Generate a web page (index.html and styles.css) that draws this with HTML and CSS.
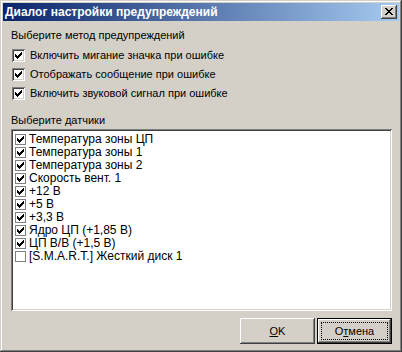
FILE: index.html
```html
<!DOCTYPE html>
<html>
<head>
    <title>Диалог настройки предупреждений</title>
    <link rel="stylesheet" href="styles.css">
</head>
<body>
    <div class="window">
        <div class="titlebar">
            <span class="title">Диалог настройки предупреждений</span>
            <button class="close-btn">
                <svg width="8" height="7" viewBox="0 0 8 7" shape-rendering="crispEdges"><path d="M0 0h2v1h-2zM6 0h2v1h-2zM1 1h2v1h-2zM5 1h2v1h-2zM2 2h4v1h-4zM3 3h2v1h-2zM2 4h4v1h-4zM1 5h2v1h-2zM5 5h2v1h-2zM0 6h2v1h-2zM6 6h2v1h-2z" fill="#000"/></svg>
            </button>
        </div>

        <div class="content">
            <div class="group-label">Выберите метод предупреждений</div>
            <div class="options">
                <label class="option"><span class="check3d"><svg class="tick" width="7" height="7" viewBox="0 0 7 7" shape-rendering="crispEdges"><path d="M0 2h1v3h-1zM1 3h1v3h-1zM2 4h1v3h-1zM3 3h1v3h-1zM4 2h1v3h-1zM5 1h1v3h-1zM6 0h1v3h-1z"/></svg></span>Включить мигание значка при ошибке</label>
                <label class="option"><span class="check3d"><svg class="tick" width="7" height="7" viewBox="0 0 7 7" shape-rendering="crispEdges"><path d="M0 2h1v3h-1zM1 3h1v3h-1zM2 4h1v3h-1zM3 3h1v3h-1zM4 2h1v3h-1zM5 1h1v3h-1zM6 0h1v3h-1z"/></svg></span>Отображать сообщение при ошибке</label>
                <label class="option"><span class="check3d"><svg class="tick" width="7" height="7" viewBox="0 0 7 7" shape-rendering="crispEdges"><path d="M0 2h1v3h-1zM1 3h1v3h-1zM2 4h1v3h-1zM3 3h1v3h-1zM4 2h1v3h-1zM5 1h1v3h-1zM6 0h1v3h-1z"/></svg></span>Включить звуковой сигнал при ошибке</label>
            </div>

            <div class="group-label sensors-label">Выберите датчики</div>
            <div class="listbox">
                <div class="item"><span class="check-flat"><svg class="tick" width="7" height="7" viewBox="0 0 7 7" shape-rendering="crispEdges"><path d="M0 2h1v3h-1zM1 3h1v3h-1zM2 4h1v3h-1zM3 3h1v3h-1zM4 2h1v3h-1zM5 1h1v3h-1zM6 0h1v3h-1z"/></svg></span>Температура зоны ЦП</div>
                <div class="item"><span class="check-flat"><svg class="tick" width="7" height="7" viewBox="0 0 7 7" shape-rendering="crispEdges"><path d="M0 2h1v3h-1zM1 3h1v3h-1zM2 4h1v3h-1zM3 3h1v3h-1zM4 2h1v3h-1zM5 1h1v3h-1zM6 0h1v3h-1z"/></svg></span>Температура зоны 1</div>
                <div class="item"><span class="check-flat"><svg class="tick" width="7" height="7" viewBox="0 0 7 7" shape-rendering="crispEdges"><path d="M0 2h1v3h-1zM1 3h1v3h-1zM2 4h1v3h-1zM3 3h1v3h-1zM4 2h1v3h-1zM5 1h1v3h-1zM6 0h1v3h-1z"/></svg></span>Температура зоны 2</div>
                <div class="item"><span class="check-flat"><svg class="tick" width="7" height="7" viewBox="0 0 7 7" shape-rendering="crispEdges"><path d="M0 2h1v3h-1zM1 3h1v3h-1zM2 4h1v3h-1zM3 3h1v3h-1zM4 2h1v3h-1zM5 1h1v3h-1zM6 0h1v3h-1z"/></svg></span>Скорость вент. 1</div>
                <div class="item"><span class="check-flat"><svg class="tick" width="7" height="7" viewBox="0 0 7 7" shape-rendering="crispEdges"><path d="M0 2h1v3h-1zM1 3h1v3h-1zM2 4h1v3h-1zM3 3h1v3h-1zM4 2h1v3h-1zM5 1h1v3h-1zM6 0h1v3h-1z"/></svg></span>+12 В</div>
                <div class="item"><span class="check-flat"><svg class="tick" width="7" height="7" viewBox="0 0 7 7" shape-rendering="crispEdges"><path d="M0 2h1v3h-1zM1 3h1v3h-1zM2 4h1v3h-1zM3 3h1v3h-1zM4 2h1v3h-1zM5 1h1v3h-1zM6 0h1v3h-1z"/></svg></span>+5 В</div>
                <div class="item"><span class="check-flat"><svg class="tick" width="7" height="7" viewBox="0 0 7 7" shape-rendering="crispEdges"><path d="M0 2h1v3h-1zM1 3h1v3h-1zM2 4h1v3h-1zM3 3h1v3h-1zM4 2h1v3h-1zM5 1h1v3h-1zM6 0h1v3h-1z"/></svg></span>+3,3 В</div>
                <div class="item"><span class="check-flat"><svg class="tick" width="7" height="7" viewBox="0 0 7 7" shape-rendering="crispEdges"><path d="M0 2h1v3h-1zM1 3h1v3h-1zM2 4h1v3h-1zM3 3h1v3h-1zM4 2h1v3h-1zM5 1h1v3h-1zM6 0h1v3h-1z"/></svg></span>Ядро ЦП (+1,85 В)</div>
                <div class="item"><span class="check-flat"><svg class="tick" width="7" height="7" viewBox="0 0 7 7" shape-rendering="crispEdges"><path d="M0 2h1v3h-1zM1 3h1v3h-1zM2 4h1v3h-1zM3 3h1v3h-1zM4 2h1v3h-1zM5 1h1v3h-1zM6 0h1v3h-1z"/></svg></span>ЦП В/В (+1,5 В)</div>
                <div class="item"><span class="check-flat"></span>[S.M.A.R.T.] Жесткий диск 1</div>
            </div>

            <div class="buttons">
                <button class="btn"><u>O</u>K</button>
                <button class="btn btn-default"><span class="focus">О<u>т</u>мена</span></button>
            </div>
        </div>
    </div>
</body>
</html>
```

FILE: styles.css
```css
body, html {
    margin: 0;
    padding: 0;
}

body {
    font-family: "Liberation Sans", Arial, sans-serif;
    font-size: 11px;
    color: #000;
}

.window {
    width: 402px;
    height: 352px;
    box-sizing: border-box;
    padding: 3px;
    background-color: #d4d0c8;
    box-shadow: inset -1px -1px #404040, inset 1px 1px #d4d0c8,
                inset -2px -2px #808080, inset 2px 2px #fff;
}

.titlebar {
    height: 18px;
    display: flex;
    align-items: flex-start;
    background: linear-gradient(to right, #0a246a, #a6caf0);
}

.title {
    flex: 1;
    padding-left: 2px;
    line-height: 18px;
    font-size: 12px;
    font-weight: bold;
    color: #fff;
    white-space: nowrap;
}

.close-btn {
    width: 16px;
    height: 14px;
    margin: 2px 2px 0 0;
    padding: 3px 0 0 4px;
    border: none;
    box-sizing: border-box;
    display: flex;
    align-items: flex-start;
    background-color: #d4d0c8;
    box-shadow: inset -1px -1px #404040, inset 1px 1px #fff,
                inset -2px -2px #808080, inset 2px 2px #d4d0c8;
}

.close-btn svg {
    display: block;
}

.content {
    padding: 0 7px 0 8px;
}

.group-label {
    margin-top: 8px;
    line-height: 13px;
    white-space: nowrap;
}

.options {
    margin-top: 7px;
    display: flex;
    flex-direction: column;
    gap: 6px;
}

.option {
    display: flex;
    align-items: center;
    height: 13px;
    padding-left: 1px;
    line-height: 13px;
    white-space: nowrap;
}

.check3d {
    width: 13px;
    height: 13px;
    flex: none;
    box-sizing: border-box;
    padding: 3px;
    margin-right: 5px;
    background-color: #fff;
    box-shadow: inset 1px 1px #808080, inset -1px -1px #fff,
                inset 2px 2px #404040, inset -2px -2px #d4d0c8;
}

.tick {
    display: block;
    fill: #000;
}

.sensors-label {
    margin-top: 14px;
}

.listbox {
    margin-top: 2px;
    height: 182px;
    box-sizing: border-box;
    padding: 4px 2px 2px 4px;
    background-color: #fff;
    box-shadow: inset 1px 1px #808080, inset -1px -1px #fff,
                inset 2px 2px #404040, inset -2px -2px #d4d0c8;
}

.item {
    display: flex;
    align-items: center;
    height: 13px;
    line-height: 13px;
    font-size: 12px;
    white-space: nowrap;
}

.check-flat {
    width: 11px;
    height: 11px;
    flex: none;
    box-sizing: border-box;
    border: 1px solid #808080;
    padding: 1px;
    margin-right: 3px;
    background-color: #fff;
}

.buttons {
    margin-top: 7px;
    display: flex;
    justify-content: flex-end;
    gap: 2px;
}

.btn {
    width: 75px;
    height: 26px;
    border: none;
    padding: 0;
    font-family: "Liberation Sans", Arial, sans-serif;
    font-size: 11px;
    color: #000;
    background-color: #d4d0c8;
    box-shadow: inset -1px -1px #404040, inset 1px 1px #fff,
                inset -2px -2px #808080, inset 2px 2px #d4d0c8;
}

.btn-default {
    display: flex;
    padding: 4px;
    box-shadow: inset 0 0 0 1px #000, inset -2px -2px #404040, inset 2px 2px #fff,
                inset -3px -3px #808080;
}

.focus {
    flex: 1;
    display: flex;
    align-items: center;
    justify-content: center;
    border: 1px dotted #000;
}
```
